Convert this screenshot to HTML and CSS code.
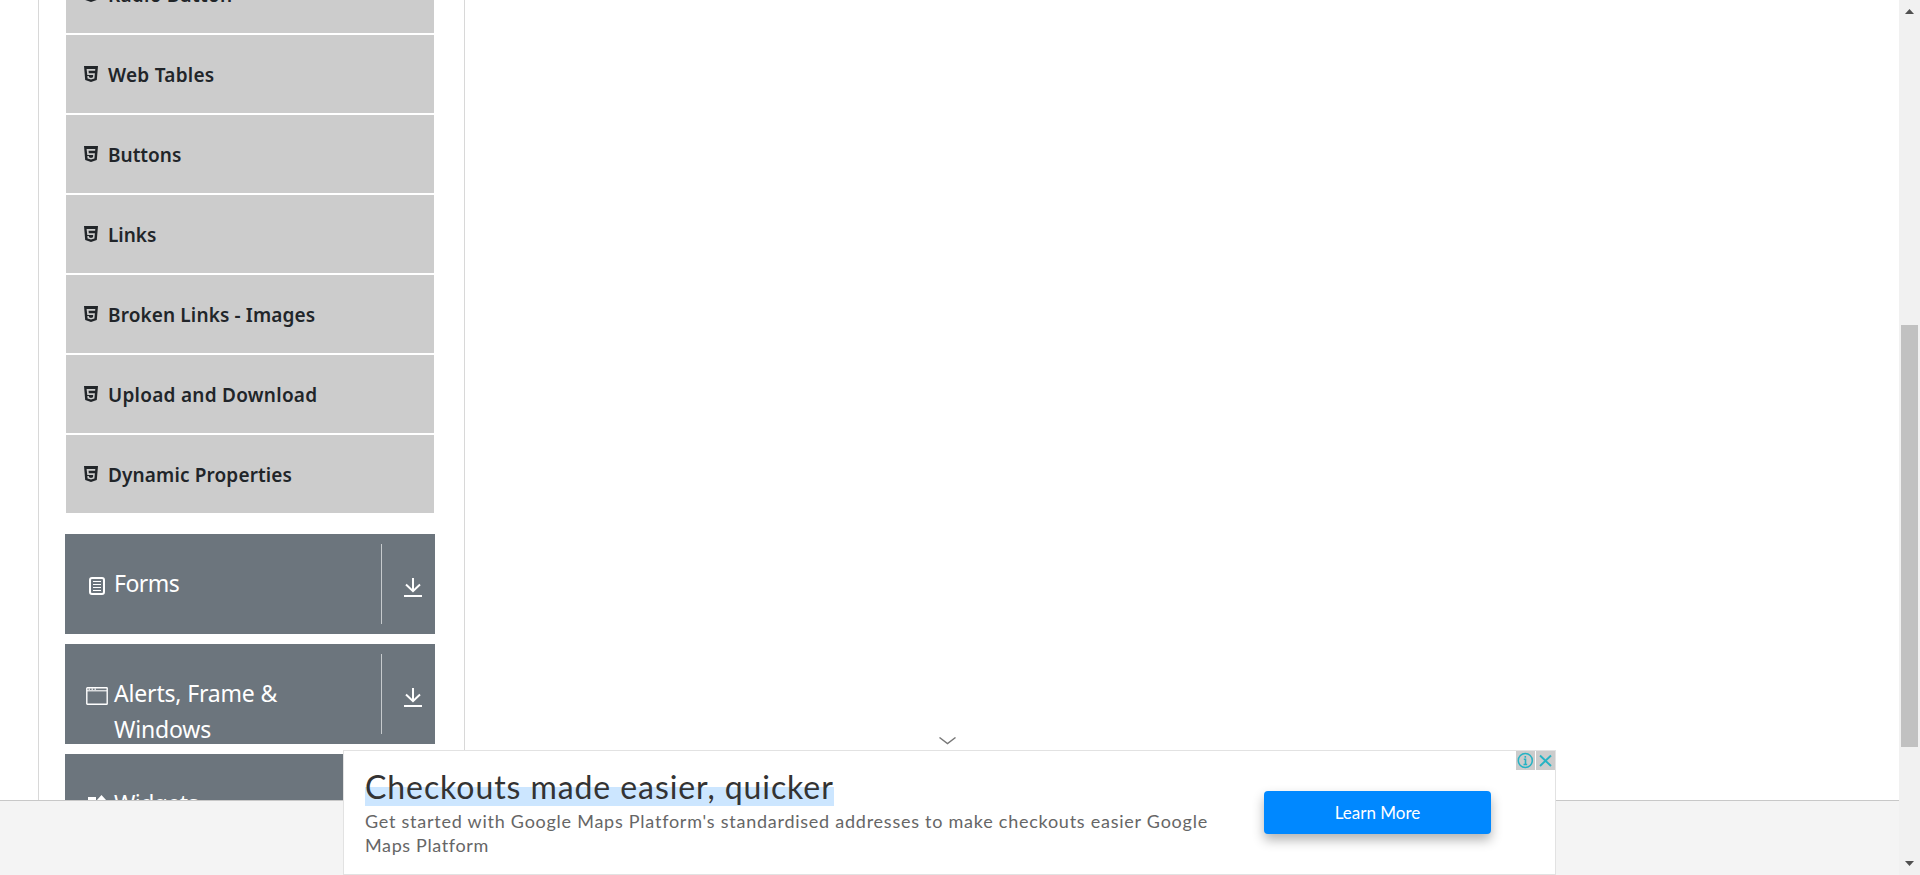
FILE: index.html
```html
<!DOCTYPE html>
<html lang="en">
<head>
<meta charset="utf-8">
<title>Elements</title>
<link rel="stylesheet" href="styles.css">
</head>
<body>
<svg class="defs" width="0" height="0" aria-hidden="true">
  <symbol id="html5" viewBox="0 0 14 16"><path fill-rule="evenodd" d="M0 0H14L12.8 14L7 16L1.2 14ZM2.6 3L3.3 9H9.2L9 11.2L7 11.9L5 11.2L4.9 10H3.3L3.6 12.4L7 13.6L10.4 12.4L10.9 7.3H4.8L4.6 4.8H11.1L11.3 3Z"/></symbol>
  <symbol id="down" viewBox="0 0 18 19"><path d="M9 0V13M2 6.5L9 13.2L16 6.5M0 18H18" fill="none" stroke="#fff" stroke-width="2"/></symbol>
</svg>
<div class="window">
  <div class="page">
    <main class="content">
      <nav class="sidebar">
        <ul class="menu">
          <li class="item"><svg class="item-icon"><use href="#html5"/></svg><span class="item-name t-web">Radio Button</span></li>
          <li class="item"><svg class="item-icon"><use href="#html5"/></svg><span class="item-name t-web">Web Tables</span></li>
          <li class="item"><svg class="item-icon"><use href="#html5"/></svg><span class="item-name">Buttons</span></li>
          <li class="item"><svg class="item-icon"><use href="#html5"/></svg><span class="item-name">Links</span></li>
          <li class="item"><svg class="item-icon"><use href="#html5"/></svg><span class="item-name t-broken">Broken Links - Images</span></li>
          <li class="item"><svg class="item-icon"><use href="#html5"/></svg><span class="item-name t-web">Upload and Download</span></li>
          <li class="item"><svg class="item-icon"><use href="#html5"/></svg><span class="item-name t-broken">Dynamic Properties</span></li>
        </ul>
        <div class="group">
          <svg class="group-icon" viewBox="0 0 22 22"><rect x="4" y="3" width="14" height="16" rx="2" fill="none" stroke="#fff" stroke-width="2"/><path d="M7 6.5H15M7 9.5H15M7 12.5H15M7 15.5H15" stroke="#fff" stroke-width="1"/></svg>
          <span class="group-name t-forms">Forms</span>
          <div class="group-toggle"><svg class="down"><use href="#down"/></svg></div>
        </div>
        <div class="group">
          <svg class="group-icon" viewBox="0 0 22 22"><rect x=".8" y="2.7" width="20.4" height="16.6" rx=".6" fill="none" stroke="#fff" stroke-width="1.4"/><path d="M1 5.8H21" stroke="#fff" stroke-width="1.1"/><path d="M2.5 4.2H4M5.5 4.2H7M8.5 4.2H10" stroke="#fff" stroke-width="1.3"/></svg>
          <span class="group-name t-alerts">Alerts, Frame &amp;<br>Windows</span>
          <div class="group-toggle"><svg class="down"><use href="#down"/></svg></div>
        </div>
        <div class="group">
          <svg class="group-icon" viewBox="0 0 22 22"><path d="M2 2H10V10H2ZM15.5 0L20.5 5.5L15.5 11L10.5 5.5ZM2 12H10V20H2ZM12 12H20V20H12Z" fill="#fff"/></svg>
          <span class="group-name t-forms">Widgets</span>
          <div class="group-toggle"><svg class="down"><use href="#down"/></svg></div>
        </div>
      </nav>
    </main>
    <footer class="footer"></footer>
  </div>
  <div class="scrollbar">
    <svg class="arrow" viewBox="0 0 9 5"><path d="M0 5L4.5 0L9 5Z"/></svg>
    <div class="thumb"></div>
    <svg class="arrow" viewBox="0 0 9 5"><path d="M0 0L4.5 5L9 0Z"/></svg>
  </div>
  <svg class="collapse" viewBox="0 0 17 8"><path d="M.5 .5L8.5 6.5L16.5 .5" fill="none" stroke="#777" stroke-width="1.4"/></svg>
  <aside class="ad">
    <div class="ad-copy">
      <h2 class="ad-title"><span class="ad-mark">Checkouts made easier, quicker</span></h2>
      <p class="ad-text"><span class="ad-line1">Get started with Google Maps Platform's standardised addresses to make checkouts easier Google</span><br><span class="ad-line2">Maps Platform</span></p>
    </div>
    <a class="cta">Learn More</a>
    <div class="choices">
      <svg class="choice" viewBox="0 0 19 19"><circle cx="9.3" cy="9.5" r="7" fill="none" stroke="#26b3c4" stroke-width="1.5"/><path d="M9.3 5V6.7M7.8 8.2H9.5V13.3M7.5 13.5H11.2" fill="none" stroke="#26b3c4" stroke-width="1.6"/></svg>
      <svg class="choice" viewBox="0 0 19 19"><path d="M4 4.5L15 15M15 4.5L4 15" stroke="#26b3c4" stroke-width="1.9"/></svg>
    </div>
  </aside>
</div>
</body>
</html>
```
FILE: styles.css
```css
* { box-sizing: border-box; }
body { margin: 0; background: #fff; font-family: "Noto Sans", "Open Sans", sans-serif; color: #212529; }
.defs { position: absolute; }
.window { position: relative; display: flex; width: 1920px; height: 875px; overflow: hidden; }
.page { display: flex; flex-direction: column; width: 1899px; height: 875px; }
.content { height: 800px; overflow: hidden; padding-left: 38px; }
.sidebar { width: 427px; height: 900px; border: 1px solid #d8d8d8; border-width: 0 1px; padding: 0 29px 0 26px; }
.menu { list-style: none; margin: -45px 1px 21px; padding: 0; display: flex; flex-direction: column; gap: 2px; }
.item { display: flex; align-items: center; height: 78px; padding: 0 0 0 18px; background: #ccc; font-size: 19px; font-weight: 600; line-height: 30px; white-space: nowrap; }
.item-name { padding-top: 2px; }
.item-icon { width: 14px; height: 16px; margin: 0 10px 0 0; fill: #212529; }
.t-web { letter-spacing: .26px; }
.t-broken { letter-spacing: .13px; }
.group { display: flex; align-items: flex-start; width: 370px; height: 100px; margin-bottom: 10px; padding: 10px 0 0 21px; background: #6c757d; color: #fff; overflow: hidden; }
.group-icon { width: 22px; height: 22px; margin: 31px 6px 0 0; flex: none; }
.group-name { width: 267px; padding-top: 21px; font-size: 23px; line-height: 36px; white-space: nowrap; }
.t-forms { letter-spacing: -.55px; }
.t-alerts { letter-spacing: -.18px; }
.group-toggle { width: 54px; height: 80px; border-left: 1px solid #c6cacd; padding: 34px 0 0 22px; }
.down { display: block; width: 18px; height: 19px; }
.footer { height: 75px; border-top: 1px solid #c8c8c8; background: #f4f4f4; }
.scrollbar { display: flex; flex-direction: column; justify-content: space-between; width: 21px; height: 875px; padding: 9px 2px; background: #f1f1f1; }
.arrow { width: 9px; height: 5px; margin-left: 4px; fill: #505050; }
.thumb { width: 17px; height: 422px; margin-top: 197px; background: #c1c1c1; }
.collapse { position: absolute; left: 939px; top: 737px; width: 17px; height: 8px; }
.ad { position: absolute; left: 343px; top: 750px; display: flex; width: 1213px; height: 125px; border: 1px solid #e2e2e2; background: #fff; font-family: Lato, "Open Sans", sans-serif; }
.ad-copy { width: 920px; padding: 16px 0 0 21px; }
.ad-title { margin: 0; font-size: 32px; font-weight: 400; line-height: 39px; color: #333; white-space: nowrap; height: 42px; }
.ad-mark { display: inline-block; height: 39px; background: linear-gradient(#fff 20px, #cce6ff 20px); letter-spacing: .92px; }
.ad-text { margin: 0; font-size: 18px; line-height: 24px; color: #666; white-space: nowrap; }
.ad-line1 { letter-spacing: .75px; }
.ad-line2 { letter-spacing: .63px; }
.cta { display: flex; align-items: center; justify-content: center; width: 227px; height: 43px; margin-top: 40px; padding-bottom: 1px; border-radius: 4px; background: #08f; box-shadow: 0 6px 12px rgba(0,0,0,.3); color: #fff; font-size: 17px; }
.choices { position: absolute; right: 0; top: 0; display: flex; gap: 1px; }
.choice { width: 19px; height: 19px; background: #ccc; }
```
